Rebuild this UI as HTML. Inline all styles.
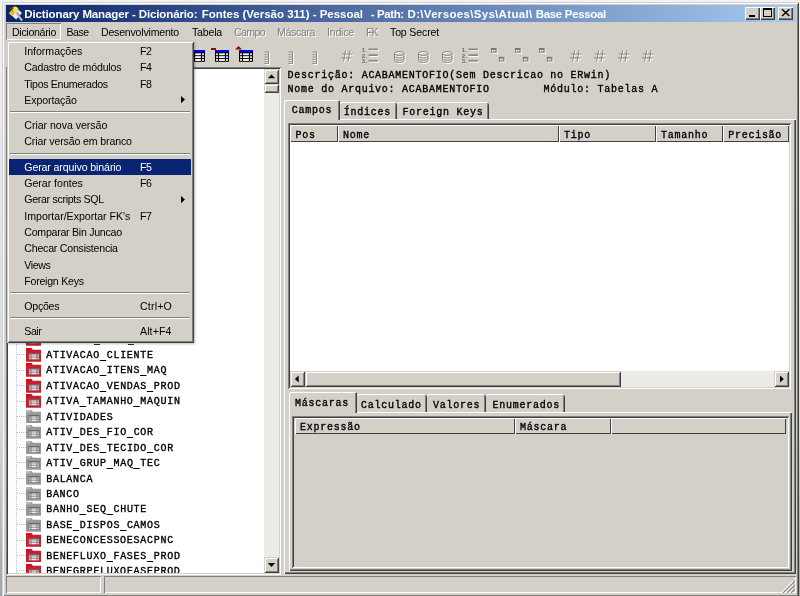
<!DOCTYPE html>
<html lang="pt"><head><meta charset="utf-8"><title>Dictionary Manager</title>
<style>
html,body{margin:0;padding:0;}
body{width:800px;height:596px;overflow:hidden;position:relative;
 background:linear-gradient(to bottom,#f1f1f8 0,#e3e6fa 25%,#cedee8 70%,#a2b2be 94%,#98a8b4 100%);}
#w{position:absolute;left:0;top:0;width:800px;height:596px;overflow:hidden;filter:blur(0.4px);}
#w div,#w svg,#w span.t{position:absolute;}
#w div{box-sizing:border-box;}
.t{white-space:pre;}
.u{position:relative;top:1.8px;}
</style></head>
<body><div id="w">
<div class="" style="left:2px;top:2px;width:797px;height:595px;background:#d4d0c8;box-shadow:inset 1px 1px #d4d0c8,inset -1px -1px #404040,inset 2px 2px #fff,inset -2px -2px #808080;"></div>
<div class="" style="left:6px;top:5px;width:790px;height:17px;background:linear-gradient(to right,#0a246a 0%,#a6caf0 100%);"></div>
<svg style="left:6px;top:5px" width="19" height="17" viewBox="6 5 19 17">
<path d="M9 13.2 L14.8 6.6 L22 13 L16.2 19.6 Z" fill="#ecece0"/>
<path d="M9 13.2 L12.5 9.2 L15.5 12 L12 16 Z" fill="#f0b428"/>
<ellipse cx="15.6" cy="9.4" rx="2.6" ry="3" fill="#e6e650" transform="rotate(-40 15.6 9.4)"/>
<path d="M10.3 7.8 L12.6 10.6 M11.8 7.2 L13.2 9" stroke="#a03810" stroke-width="1.1"/>
<path d="M17 12.6 L22.8 20.4" stroke="#56527a" stroke-width="1.4"/>
<path d="M16.2 13 L22 20.6" stroke="#c4bcd0" stroke-width="1.9"/>
</svg>
<span class="t" style="left:24.25px;top:6.60px;line-height:14px;font-family:'Liberation Sans',sans-serif;font-size:11.5px;font-weight:700;color:#fff;letter-spacing:-0.118px;">Dictionary Manager - Dicionário:</span>
<span class="t" style="left:201.75px;top:6.60px;line-height:14px;font-family:'Liberation Sans',sans-serif;font-size:11.5px;font-weight:700;color:#fff;letter-spacing:-0.016px;">Fontes (Versão 311) - Pessoal</span>
<span class="t" style="left:370.75px;top:6.60px;line-height:14px;font-family:'Liberation Sans',sans-serif;font-size:11.5px;font-weight:700;color:#fff;letter-spacing:-0.397px;">- Path:</span>
<span class="t" style="left:407.5px;top:6.60px;line-height:14px;font-family:'Liberation Sans',sans-serif;font-size:11.5px;font-weight:700;color:#fff;letter-spacing:0.321px;">D:\Versoes\Sys\Atual\</span>
<span class="t" style="left:535.75px;top:6.60px;line-height:14px;font-family:'Liberation Sans',sans-serif;font-size:11.5px;font-weight:700;color:#fff;letter-spacing:-0.327px;">Base Pessoal</span>
<div class="" style="left:745px;top:6.6px;width:15px;height:13.3px;background:#d4d0c8;box-shadow:inset 1px 1px #fff,inset -1px -1px #404040,inset -2px -2px #808080;"></div>
<div class="" style="left:749px;top:15.2px;width:6px;height:2px;background:#000;"></div>
<div class="" style="left:760.3px;top:6.6px;width:15px;height:13.3px;background:#d4d0c8;box-shadow:inset 1px 1px #fff,inset -1px -1px #404040,inset -2px -2px #808080;"></div>
<div class="" style="left:763.3px;top:8.4px;width:9px;height:8.4px;border:1px solid #000;border-top:2px solid #000;box-sizing:border-box;"></div>
<div class="" style="left:777.6px;top:6.6px;width:15px;height:13.3px;background:#d4d0c8;box-shadow:inset 1px 1px #fff,inset -1px -1px #404040,inset -2px -2px #808080;"></div>
<svg style="left:777.6px;top:6.4px" width="15" height="13.5" viewBox="0 0 15 13.5"><path d="M4 3.2 L11.4 10 M11.4 3.2 L4 10" stroke="#000" stroke-width="1.45"/></svg>
<div class="" style="left:6px;top:23px;width:55px;height:17px;box-shadow:inset 1px 1px #808080,inset -1px -1px #fff;"></div>
<span class="t" style="left:12px;top:25.10px;line-height:14px;font-family:'Liberation Sans',sans-serif;font-size:10.6px;font-weight:400;color:#000;letter-spacing:-0.311px;">Dicionário</span>
<span class="t" style="left:66.5px;top:24.60px;line-height:14px;font-family:'Liberation Sans',sans-serif;font-size:10.6px;font-weight:400;color:#000;letter-spacing:-0.539px;">Base</span>
<span class="t" style="left:101px;top:24.60px;line-height:14px;font-family:'Liberation Sans',sans-serif;font-size:10.6px;font-weight:400;color:#000;letter-spacing:-0.218px;">Desenvolvimento</span>
<span class="t" style="left:192px;top:24.60px;line-height:14px;font-family:'Liberation Sans',sans-serif;font-size:10.6px;font-weight:400;color:#000;letter-spacing:-0.203px;">Tabela</span>
<span class="t" style="left:235px;top:25.60px;line-height:14px;font-family:'Liberation Sans',sans-serif;font-size:10.6px;font-weight:400;color:#fff;letter-spacing:-0.631px;">Campo</span>
<span class="t" style="left:234px;top:24.60px;line-height:14px;font-family:'Liberation Sans',sans-serif;font-size:10.6px;font-weight:400;color:#808080;letter-spacing:-0.631px;">Campo</span>
<span class="t" style="left:278px;top:25.60px;line-height:14px;font-family:'Liberation Sans',sans-serif;font-size:10.6px;font-weight:400;color:#fff;letter-spacing:-0.375px;">Máscara</span>
<span class="t" style="left:277px;top:24.60px;line-height:14px;font-family:'Liberation Sans',sans-serif;font-size:10.6px;font-weight:400;color:#808080;letter-spacing:-0.375px;">Máscara</span>
<span class="t" style="left:328px;top:25.60px;line-height:14px;font-family:'Liberation Sans',sans-serif;font-size:10.6px;font-weight:400;color:#fff;letter-spacing:-0.214px;">Indice</span>
<span class="t" style="left:327px;top:24.60px;line-height:14px;font-family:'Liberation Sans',sans-serif;font-size:10.6px;font-weight:400;color:#808080;letter-spacing:-0.214px;">Indice</span>
<span class="t" style="left:367px;top:25.60px;line-height:14px;font-family:'Liberation Sans',sans-serif;font-size:10.6px;font-weight:400;color:#fff;letter-spacing:-1.023px;">FK</span>
<span class="t" style="left:366px;top:24.60px;line-height:14px;font-family:'Liberation Sans',sans-serif;font-size:10.6px;font-weight:400;color:#808080;letter-spacing:-1.023px;">FK</span>
<span class="t" style="left:390px;top:24.60px;line-height:14px;font-family:'Liberation Sans',sans-serif;font-size:10.6px;font-weight:400;color:#000;letter-spacing:-0.164px;">Top Secret</span>
<svg style="left:190.5px;top:49.8px" width="14.4" height="11.8" viewBox="0 0 15 12" preserveAspectRatio="none">
<rect x="0" y="0" width="15" height="12" fill="#000"/>
<rect x="0" y="0" width="15" height="2.4" fill="#0000f0"/>
<g fill="#fff"><rect x="1.2" y="3.4" width="1.8" height="1.9"/><rect x="4.3" y="3.4" width="6" height="1.9"/><rect x="11.6" y="3.4" width="1.8" height="1.9"/>
<rect x="1.2" y="6.3" width="1.8" height="1.9"/><rect x="4.3" y="6.3" width="6" height="1.9"/><rect x="11.6" y="6.3" width="1.8" height="1.9"/>
<rect x="1.2" y="9.2" width="1.8" height="1.9"/><rect x="4.3" y="9.2" width="6" height="1.9"/><rect x="11.6" y="9.2" width="1.8" height="1.9"/></g></svg>
<svg style="left:214.7px;top:49.8px" width="14.4" height="11.8" viewBox="0 0 15 12" preserveAspectRatio="none">
<rect x="0" y="0" width="15" height="12" fill="#000"/>
<rect x="0" y="0" width="15" height="2.4" fill="#0000f0"/>
<g fill="#fff"><rect x="1.2" y="3.4" width="1.8" height="1.9"/><rect x="4.3" y="3.4" width="6" height="1.9"/><rect x="11.6" y="3.4" width="1.8" height="1.9"/>
<rect x="1.2" y="6.3" width="1.8" height="1.9"/><rect x="4.3" y="6.3" width="6" height="1.9"/><rect x="11.6" y="6.3" width="1.8" height="1.9"/>
<rect x="1.2" y="9.2" width="1.8" height="1.9"/><rect x="4.3" y="9.2" width="6" height="1.9"/><rect x="11.6" y="9.2" width="1.8" height="1.9"/></g></svg>
<svg style="left:238.9px;top:49.8px" width="14.4" height="11.8" viewBox="0 0 15 12" preserveAspectRatio="none">
<rect x="0" y="0" width="15" height="12" fill="#000"/>
<rect x="0" y="0" width="15" height="2.4" fill="#0000f0"/>
<g fill="#fff"><rect x="1.2" y="3.4" width="1.8" height="1.9"/><rect x="4.3" y="3.4" width="6" height="1.9"/><rect x="11.6" y="3.4" width="1.8" height="1.9"/>
<rect x="1.2" y="6.3" width="1.8" height="1.9"/><rect x="4.3" y="6.3" width="6" height="1.9"/><rect x="11.6" y="6.3" width="1.8" height="1.9"/>
<rect x="1.2" y="9.2" width="1.8" height="1.9"/><rect x="4.3" y="9.2" width="6" height="1.9"/><rect x="11.6" y="9.2" width="1.8" height="1.9"/></g></svg>
<div class="" style="left:210.8px;top:47.8px;width:5.6px;height:1.8px;background:#a00000;"></div>
<svg style="left:235px;top:46px" width="7.2" height="3.6" viewBox="0 0 8 4"><path d="M0 4 L4 0 L8 4Z" fill="#a00000"/></svg>
<svg style="left:263.8px;top:50.5px" width="6.5" height="14" viewBox="0 0 6.5 14">
<g fill="none" stroke="#fff" stroke-width="1"><path d="M1.5 2 H5.5 V13.5 H1.5 M1.5 4.8 H5.5 M1.5 7.1 H5.5 M1.5 9.4 H5.5 M1.5 11.6 H5.5"/></g>
<g fill="none" stroke="#8a8781" stroke-width="1"><path d="M0.5 1 H4.5 V12.5 H0.5 M0.5 3.8 H4.5 M0.5 6.1 H4.5 M0.5 8.4 H4.5 M0.5 10.6 H4.5"/></g></svg>
<svg style="left:287.8px;top:50.5px" width="6.5" height="14" viewBox="0 0 6.5 14">
<g fill="none" stroke="#fff" stroke-width="1"><path d="M1.5 2 H5.5 V13.5 H1.5 M1.5 4.8 H5.5 M1.5 7.1 H5.5 M1.5 9.4 H5.5 M1.5 11.6 H5.5"/></g>
<g fill="none" stroke="#8a8781" stroke-width="1"><path d="M0.5 1 H4.5 V12.5 H0.5 M0.5 3.8 H4.5 M0.5 6.1 H4.5 M0.5 8.4 H4.5 M0.5 10.6 H4.5"/></g></svg>
<svg style="left:312px;top:50.5px" width="6.5" height="14" viewBox="0 0 6.5 14">
<g fill="none" stroke="#fff" stroke-width="1"><path d="M1.5 2 H5.5 V13.5 H1.5 M1.5 4.8 H5.5 M1.5 7.1 H5.5 M1.5 9.4 H5.5 M1.5 11.6 H5.5"/></g>
<g fill="none" stroke="#8a8781" stroke-width="1"><path d="M0.5 1 H4.5 V12.5 H0.5 M0.5 3.8 H4.5 M0.5 6.1 H4.5 M0.5 8.4 H4.5 M0.5 10.6 H4.5"/></g></svg>
<svg style="left:341px;top:50px" width="13" height="13" viewBox="0 0 13 13">
<g fill="none" stroke="#fff" stroke-width="1"><path d="M5.5 1.5 L3.5 12.5 M10 1.5 L8 12.5 M2 5 H12.5 M1 9 H11.5"/></g>
<g fill="none" stroke="#8a8781" stroke-width="1"><path d="M4.5 0.5 L2.5 11.5 M9 0.5 L7 11.5 M1 4 H11.5 M0 8 H10.5"/></g></svg>
<svg style="left:570px;top:50px" width="13" height="13" viewBox="0 0 13 13">
<g fill="none" stroke="#fff" stroke-width="1"><path d="M5.5 1.5 L3.5 12.5 M10 1.5 L8 12.5 M2 5 H12.5 M1 9 H11.5"/></g>
<g fill="none" stroke="#8a8781" stroke-width="1"><path d="M4.5 0.5 L2.5 11.5 M9 0.5 L7 11.5 M1 4 H11.5 M0 8 H10.5"/></g></svg>
<svg style="left:594px;top:50px" width="13" height="13" viewBox="0 0 13 13">
<g fill="none" stroke="#fff" stroke-width="1"><path d="M5.5 1.5 L3.5 12.5 M10 1.5 L8 12.5 M2 5 H12.5 M1 9 H11.5"/></g>
<g fill="none" stroke="#8a8781" stroke-width="1"><path d="M4.5 0.5 L2.5 11.5 M9 0.5 L7 11.5 M1 4 H11.5 M0 8 H10.5"/></g></svg>
<svg style="left:618px;top:50px" width="13" height="13" viewBox="0 0 13 13">
<g fill="none" stroke="#fff" stroke-width="1"><path d="M5.5 1.5 L3.5 12.5 M10 1.5 L8 12.5 M2 5 H12.5 M1 9 H11.5"/></g>
<g fill="none" stroke="#8a8781" stroke-width="1"><path d="M4.5 0.5 L2.5 11.5 M9 0.5 L7 11.5 M1 4 H11.5 M0 8 H10.5"/></g></svg>
<svg style="left:642px;top:50px" width="13" height="13" viewBox="0 0 13 13">
<g fill="none" stroke="#fff" stroke-width="1"><path d="M5.5 1.5 L3.5 12.5 M10 1.5 L8 12.5 M2 5 H12.5 M1 9 H11.5"/></g>
<g fill="none" stroke="#8a8781" stroke-width="1"><path d="M4.5 0.5 L2.5 11.5 M9 0.5 L7 11.5 M1 4 H11.5 M0 8 H10.5"/></g></svg>
<svg style="left:361px;top:46.5px" width="18" height="17" viewBox="0 0 18 17">
<g fill="#fff"><rect x="8.3" y="2.4" width="9.4" height="1.7"/><rect x="8.3" y="8.2" width="9.4" height="1.7"/><rect x="8.3" y="13.8" width="9.4" height="1.7"/></g>
<g fill="#8a8781"><rect x="7.5" y="1.5" width="9.4" height="1.7"/><rect x="7.5" y="7.3" width="9.4" height="1.7"/><rect x="7.5" y="12.9" width="9.4" height="1.7"/></g>
<g font-family="Liberation Sans,sans-serif" font-size="6" font-weight="700" fill="#6c6a66"><text x="0.8" y="5.2">1.</text><text x="0.8" y="10.8">2.</text><text x="0.8" y="16.3">3.</text></g></svg>
<svg style="left:461px;top:46.5px" width="18" height="17" viewBox="0 0 18 17">
<g fill="#fff"><rect x="8.3" y="2.4" width="9.4" height="1.7"/><rect x="8.3" y="8.2" width="9.4" height="1.7"/><rect x="8.3" y="13.8" width="9.4" height="1.7"/></g>
<g fill="#8a8781"><rect x="7.5" y="1.5" width="9.4" height="1.7"/><rect x="7.5" y="7.3" width="9.4" height="1.7"/><rect x="7.5" y="12.9" width="9.4" height="1.7"/></g>
<g font-family="Liberation Sans,sans-serif" font-size="6" font-weight="700" fill="#6c6a66"><text x="0.8" y="5.2">1.</text><text x="0.8" y="10.8">2.</text><text x="0.8" y="16.3">3.</text></g></svg>
<svg style="left:393.8px;top:50.5px" width="13" height="14" viewBox="0 0 13 14">
<g fill="none" stroke="#fff" stroke-width="1"><ellipse cx="6.2" cy="3.5" rx="4.7" ry="2"/><path d="M1.5 3.5 V10.5 A4.7 2 0 0 0 10.9 10.5 V3.5 M1.5 6 A4.7 2 0 0 0 10.9 6 M1.5 8.3 A4.7 2 0 0 0 10.9 8.3"/></g>
<g fill="none" stroke="#8a8781" stroke-width="1"><ellipse cx="5.2" cy="2.5" rx="4.7" ry="2"/><path d="M0.5 2.5 V9.5 A4.7 2 0 0 0 9.9 9.5 V2.5 M0.5 5 A4.7 2 0 0 0 9.9 5 M0.5 7.3 A4.7 2 0 0 0 9.9 7.3"/></g></svg>
<svg style="left:417.8px;top:50.5px" width="13" height="14" viewBox="0 0 13 14">
<g fill="none" stroke="#fff" stroke-width="1"><ellipse cx="6.2" cy="3.5" rx="4.7" ry="2"/><path d="M1.5 3.5 V10.5 A4.7 2 0 0 0 10.9 10.5 V3.5 M1.5 6 A4.7 2 0 0 0 10.9 6 M1.5 8.3 A4.7 2 0 0 0 10.9 8.3"/></g>
<g fill="none" stroke="#8a8781" stroke-width="1"><ellipse cx="5.2" cy="2.5" rx="4.7" ry="2"/><path d="M0.5 2.5 V9.5 A4.7 2 0 0 0 9.9 9.5 V2.5 M0.5 5 A4.7 2 0 0 0 9.9 5 M0.5 7.3 A4.7 2 0 0 0 9.9 7.3"/></g></svg>
<svg style="left:442px;top:50.5px" width="13" height="14" viewBox="0 0 13 14">
<g fill="none" stroke="#fff" stroke-width="1"><ellipse cx="6.2" cy="3.5" rx="4.7" ry="2"/><path d="M1.5 3.5 V10.5 A4.7 2 0 0 0 10.9 10.5 V3.5 M1.5 6 A4.7 2 0 0 0 10.9 6 M1.5 8.3 A4.7 2 0 0 0 10.9 8.3"/></g>
<g fill="none" stroke="#8a8781" stroke-width="1"><ellipse cx="5.2" cy="2.5" rx="4.7" ry="2"/><path d="M0.5 2.5 V9.5 A4.7 2 0 0 0 9.9 9.5 V2.5 M0.5 5 A4.7 2 0 0 0 9.9 5 M0.5 7.3 A4.7 2 0 0 0 9.9 7.3"/></g></svg>
<svg style="left:491px;top:48.3px" width="16" height="16" viewBox="0 0 16 16">
<g fill="none" stroke="#fff" stroke-width="1"><rect x="1.5" y="1.5" width="4.6" height="3.6"/><rect x="9.3" y="10.3" width="4.6" height="3.6"/></g>
<g fill="none" stroke="#76736e" stroke-width="1"><rect x="0.5" y="0.5" width="4.6" height="3.6"/><rect x="8.3" y="9.3" width="4.6" height="3.6"/><path d="M0.5 1.4 H5.1 M8.3 10.2 H12.9"/></g></svg>
<svg style="left:515px;top:48.3px" width="16" height="16" viewBox="0 0 16 16">
<g fill="none" stroke="#fff" stroke-width="1"><rect x="1.5" y="1.5" width="4.6" height="3.6"/><rect x="9.3" y="10.3" width="4.6" height="3.6"/></g>
<g fill="none" stroke="#76736e" stroke-width="1"><rect x="0.5" y="0.5" width="4.6" height="3.6"/><rect x="8.3" y="9.3" width="4.6" height="3.6"/><path d="M0.5 1.4 H5.1 M8.3 10.2 H12.9"/></g></svg>
<svg style="left:539px;top:48.3px" width="16" height="16" viewBox="0 0 16 16">
<g fill="none" stroke="#fff" stroke-width="1"><rect x="1.5" y="1.5" width="4.6" height="3.6"/><rect x="9.3" y="10.3" width="4.6" height="3.6"/></g>
<g fill="none" stroke="#76736e" stroke-width="1"><rect x="0.5" y="0.5" width="4.6" height="3.6"/><rect x="8.3" y="9.3" width="4.6" height="3.6"/><path d="M0.5 1.4 H5.1 M8.3 10.2 H12.9"/></g></svg>
<div class="" style="left:6px;top:67px;width:275px;height:507.5px;background:#fff;box-shadow:inset 1px 1px #808080,inset -1px -1px #fff,inset 2px 2px #404040,inset -2px -2px #d4d0c8;"></div>
<div style="left:0;top:0;width:264px;height:572.7px;overflow:hidden">
<div class="" style="left:15.6px;top:344px;width:0px;height:229px;border-left:1px dotted #bcc4c4;"></div>
<div class="" style="left:16.5px;top:338.86px;width:9px;height:0px;border-top:1px dotted #bcc4c4;"></div>
<svg style="left:26.1px;top:332.46px" width="15" height="13.8" viewBox="0 0 15 13.8">
<path d="M0 0 H5.6 L6.8 1.8 H15 V13.8 H0 Z" fill="#c4202e"/><path d="M0 0 H5.6 L4 2.4 H0Z" fill="#ee0018"/>
<rect x="2.5" y="5.2" width="11" height="6.6" fill="#8c5058"/>
<rect x="2.5" y="5.2" width="11" height="1" fill="#606868"/>
<g fill="#eef4f4"><rect x="3.3" y="6.45" width="1.3" height="1.2"/><rect x="5.4" y="6.45" width="5.2" height="1.2"/><rect x="11.4" y="6.45" width="1.3" height="1.2"/><rect x="3.3" y="8.25" width="1.3" height="1.2"/><rect x="5.4" y="8.25" width="5.2" height="1.2"/><rect x="11.4" y="8.25" width="1.3" height="1.2"/><rect x="3.3" y="10.05" width="1.3" height="1.2"/><rect x="5.4" y="10.05" width="5.2" height="1.2"/><rect x="11.4" y="10.05" width="1.3" height="1.2"/></g></svg>
<div class="" style="left:16.5px;top:354.3px;width:9px;height:0px;border-top:1px dotted #bcc4c4;"></div>
<svg style="left:26.1px;top:347.90px" width="15" height="13.8" viewBox="0 0 15 13.8">
<path d="M0 0 H5.6 L6.8 1.8 H15 V13.8 H0 Z" fill="#c4202e"/><path d="M0 0 H5.6 L4 2.4 H0Z" fill="#ee0018"/>
<rect x="2.5" y="5.2" width="11" height="6.6" fill="#8c5058"/>
<rect x="2.5" y="5.2" width="11" height="1" fill="#606868"/>
<g fill="#eef4f4"><rect x="3.3" y="6.45" width="1.3" height="1.2"/><rect x="5.4" y="6.45" width="5.2" height="1.2"/><rect x="11.4" y="6.45" width="1.3" height="1.2"/><rect x="3.3" y="8.25" width="1.3" height="1.2"/><rect x="5.4" y="8.25" width="5.2" height="1.2"/><rect x="11.4" y="8.25" width="1.3" height="1.2"/><rect x="3.3" y="10.05" width="1.3" height="1.2"/><rect x="5.4" y="10.05" width="5.2" height="1.2"/><rect x="11.4" y="10.05" width="1.3" height="1.2"/></g></svg>
<span class="t" style="left:46.2px;top:349.00px;line-height:14px;font-family:'Liberation Mono',monospace;font-size:10px;font-weight:400;color:#000;letter-spacing:0.719px;-webkit-text-stroke:0.35px #000;">ATIVACAO<b class="u">_</b>CLIENTE</span>
<div class="" style="left:16.5px;top:369.74px;width:9px;height:0px;border-top:1px dotted #bcc4c4;"></div>
<svg style="left:26.1px;top:363.34px" width="15" height="13.8" viewBox="0 0 15 13.8">
<path d="M0 0 H5.6 L6.8 1.8 H15 V13.8 H0 Z" fill="#c4202e"/><path d="M0 0 H5.6 L4 2.4 H0Z" fill="#ee0018"/>
<rect x="2.5" y="5.2" width="11" height="6.6" fill="#8c5058"/>
<rect x="2.5" y="5.2" width="11" height="1" fill="#606868"/>
<g fill="#eef4f4"><rect x="3.3" y="6.45" width="1.3" height="1.2"/><rect x="5.4" y="6.45" width="5.2" height="1.2"/><rect x="11.4" y="6.45" width="1.3" height="1.2"/><rect x="3.3" y="8.25" width="1.3" height="1.2"/><rect x="5.4" y="8.25" width="5.2" height="1.2"/><rect x="11.4" y="8.25" width="1.3" height="1.2"/><rect x="3.3" y="10.05" width="1.3" height="1.2"/><rect x="5.4" y="10.05" width="5.2" height="1.2"/><rect x="11.4" y="10.05" width="1.3" height="1.2"/></g></svg>
<span class="t" style="left:46.2px;top:364.44px;line-height:14px;font-family:'Liberation Mono',monospace;font-size:10px;font-weight:400;color:#000;letter-spacing:0.718px;-webkit-text-stroke:0.35px #000;">ATIVACAO<b class="u">_</b>ITENS<b class="u">_</b>MAQ</span>
<div class="" style="left:16.5px;top:385.18px;width:9px;height:0px;border-top:1px dotted #bcc4c4;"></div>
<svg style="left:26.1px;top:378.78px" width="15" height="13.8" viewBox="0 0 15 13.8">
<path d="M0 0 H5.6 L6.8 1.8 H15 V13.8 H0 Z" fill="#c4202e"/><path d="M0 0 H5.6 L4 2.4 H0Z" fill="#ee0018"/>
<rect x="2.5" y="5.2" width="11" height="6.6" fill="#8c5058"/>
<rect x="2.5" y="5.2" width="11" height="1" fill="#606868"/>
<g fill="#eef4f4"><rect x="3.3" y="6.45" width="1.3" height="1.2"/><rect x="5.4" y="6.45" width="5.2" height="1.2"/><rect x="11.4" y="6.45" width="1.3" height="1.2"/><rect x="3.3" y="8.25" width="1.3" height="1.2"/><rect x="5.4" y="8.25" width="5.2" height="1.2"/><rect x="11.4" y="8.25" width="1.3" height="1.2"/><rect x="3.3" y="10.05" width="1.3" height="1.2"/><rect x="5.4" y="10.05" width="5.2" height="1.2"/><rect x="11.4" y="10.05" width="1.3" height="1.2"/></g></svg>
<span class="t" style="left:46.2px;top:379.88px;line-height:14px;font-family:'Liberation Mono',monospace;font-size:10px;font-weight:400;color:#000;letter-spacing:0.718px;-webkit-text-stroke:0.35px #000;">ATIVACAO<b class="u">_</b>VENDAS<b class="u">_</b>PROD</span>
<div class="" style="left:16.5px;top:400.62px;width:9px;height:0px;border-top:1px dotted #bcc4c4;"></div>
<svg style="left:26.1px;top:394.22px" width="15" height="13.8" viewBox="0 0 15 13.8">
<path d="M0 0 H5.6 L6.8 1.8 H15 V13.8 H0 Z" fill="#c4202e"/><path d="M0 0 H5.6 L4 2.4 H0Z" fill="#ee0018"/>
<rect x="2.5" y="5.2" width="11" height="6.6" fill="#8c5058"/>
<rect x="2.5" y="5.2" width="11" height="1" fill="#606868"/>
<g fill="#eef4f4"><rect x="3.3" y="6.45" width="1.3" height="1.2"/><rect x="5.4" y="6.45" width="5.2" height="1.2"/><rect x="11.4" y="6.45" width="1.3" height="1.2"/><rect x="3.3" y="8.25" width="1.3" height="1.2"/><rect x="5.4" y="8.25" width="5.2" height="1.2"/><rect x="11.4" y="8.25" width="1.3" height="1.2"/><rect x="3.3" y="10.05" width="1.3" height="1.2"/><rect x="5.4" y="10.05" width="5.2" height="1.2"/><rect x="11.4" y="10.05" width="1.3" height="1.2"/></g></svg>
<span class="t" style="left:46.2px;top:395.32px;line-height:14px;font-family:'Liberation Mono',monospace;font-size:10px;font-weight:400;color:#000;letter-spacing:0.718px;-webkit-text-stroke:0.35px #000;">ATIVA<b class="u">_</b>TAMANHO<b class="u">_</b>MAQUIN</span>
<div class="" style="left:16.5px;top:416.06px;width:9px;height:0px;border-top:1px dotted #bcc4c4;"></div>
<svg style="left:26.1px;top:409.66px" width="15" height="13.8" viewBox="0 0 15 13.8">
<path d="M0 0 H5.6 L6.8 1.8 H15 V13.8 H0 Z" fill="#9a9a9a"/><path d="M0 0 H5.6 L4 2.4 H0Z" fill="#b8b8b8"/>
<rect x="2.5" y="5.2" width="11" height="6.6" fill="#6c6c6c"/>
<rect x="2.5" y="5.2" width="11" height="1" fill="#606868"/>
<g fill="#eef4f4"><rect x="3.3" y="6.45" width="1.3" height="1.2"/><rect x="5.4" y="6.45" width="5.2" height="1.2"/><rect x="11.4" y="6.45" width="1.3" height="1.2"/><rect x="3.3" y="8.25" width="1.3" height="1.2"/><rect x="5.4" y="8.25" width="5.2" height="1.2"/><rect x="11.4" y="8.25" width="1.3" height="1.2"/><rect x="3.3" y="10.05" width="1.3" height="1.2"/><rect x="5.4" y="10.05" width="5.2" height="1.2"/><rect x="11.4" y="10.05" width="1.3" height="1.2"/></g></svg>
<span class="t" style="left:46.2px;top:410.76px;line-height:14px;font-family:'Liberation Mono',monospace;font-size:10px;font-weight:400;color:#000;letter-spacing:0.718px;-webkit-text-stroke:0.35px #000;">ATIVIDADES</span>
<div class="" style="left:16.5px;top:431.5px;width:9px;height:0px;border-top:1px dotted #bcc4c4;"></div>
<svg style="left:26.1px;top:425.10px" width="15" height="13.8" viewBox="0 0 15 13.8">
<path d="M0 0 H5.6 L6.8 1.8 H15 V13.8 H0 Z" fill="#9a9a9a"/><path d="M0 0 H5.6 L4 2.4 H0Z" fill="#b8b8b8"/>
<rect x="2.5" y="5.2" width="11" height="6.6" fill="#6c6c6c"/>
<rect x="2.5" y="5.2" width="11" height="1" fill="#606868"/>
<g fill="#eef4f4"><rect x="3.3" y="6.45" width="1.3" height="1.2"/><rect x="5.4" y="6.45" width="5.2" height="1.2"/><rect x="11.4" y="6.45" width="1.3" height="1.2"/><rect x="3.3" y="8.25" width="1.3" height="1.2"/><rect x="5.4" y="8.25" width="5.2" height="1.2"/><rect x="11.4" y="8.25" width="1.3" height="1.2"/><rect x="3.3" y="10.05" width="1.3" height="1.2"/><rect x="5.4" y="10.05" width="5.2" height="1.2"/><rect x="11.4" y="10.05" width="1.3" height="1.2"/></g></svg>
<span class="t" style="left:46.2px;top:426.20px;line-height:14px;font-family:'Liberation Mono',monospace;font-size:10px;font-weight:400;color:#000;letter-spacing:0.719px;-webkit-text-stroke:0.35px #000;">ATIV<b class="u">_</b>DES<b class="u">_</b>FIO<b class="u">_</b>COR</span>
<div class="" style="left:16.5px;top:446.94px;width:9px;height:0px;border-top:1px dotted #bcc4c4;"></div>
<svg style="left:26.1px;top:440.54px" width="15" height="13.8" viewBox="0 0 15 13.8">
<path d="M0 0 H5.6 L6.8 1.8 H15 V13.8 H0 Z" fill="#9a9a9a"/><path d="M0 0 H5.6 L4 2.4 H0Z" fill="#b8b8b8"/>
<rect x="2.5" y="5.2" width="11" height="6.6" fill="#6c6c6c"/>
<rect x="2.5" y="5.2" width="11" height="1" fill="#606868"/>
<g fill="#eef4f4"><rect x="3.3" y="6.45" width="1.3" height="1.2"/><rect x="5.4" y="6.45" width="5.2" height="1.2"/><rect x="11.4" y="6.45" width="1.3" height="1.2"/><rect x="3.3" y="8.25" width="1.3" height="1.2"/><rect x="5.4" y="8.25" width="5.2" height="1.2"/><rect x="11.4" y="8.25" width="1.3" height="1.2"/><rect x="3.3" y="10.05" width="1.3" height="1.2"/><rect x="5.4" y="10.05" width="5.2" height="1.2"/><rect x="11.4" y="10.05" width="1.3" height="1.2"/></g></svg>
<span class="t" style="left:46.2px;top:441.64px;line-height:14px;font-family:'Liberation Mono',monospace;font-size:10px;font-weight:400;color:#000;letter-spacing:0.718px;-webkit-text-stroke:0.35px #000;">ATIV<b class="u">_</b>DES<b class="u">_</b>TECIDO<b class="u">_</b>COR</span>
<div class="" style="left:16.5px;top:462.38px;width:9px;height:0px;border-top:1px dotted #bcc4c4;"></div>
<svg style="left:26.1px;top:455.98px" width="15" height="13.8" viewBox="0 0 15 13.8">
<path d="M0 0 H5.6 L6.8 1.8 H15 V13.8 H0 Z" fill="#9a9a9a"/><path d="M0 0 H5.6 L4 2.4 H0Z" fill="#b8b8b8"/>
<rect x="2.5" y="5.2" width="11" height="6.6" fill="#6c6c6c"/>
<rect x="2.5" y="5.2" width="11" height="1" fill="#606868"/>
<g fill="#eef4f4"><rect x="3.3" y="6.45" width="1.3" height="1.2"/><rect x="5.4" y="6.45" width="5.2" height="1.2"/><rect x="11.4" y="6.45" width="1.3" height="1.2"/><rect x="3.3" y="8.25" width="1.3" height="1.2"/><rect x="5.4" y="8.25" width="5.2" height="1.2"/><rect x="11.4" y="8.25" width="1.3" height="1.2"/><rect x="3.3" y="10.05" width="1.3" height="1.2"/><rect x="5.4" y="10.05" width="5.2" height="1.2"/><rect x="11.4" y="10.05" width="1.3" height="1.2"/></g></svg>
<span class="t" style="left:46.2px;top:457.08px;line-height:14px;font-family:'Liberation Mono',monospace;font-size:10px;font-weight:400;color:#000;letter-spacing:0.718px;-webkit-text-stroke:0.35px #000;">ATIV<b class="u">_</b>GRUP<b class="u">_</b>MAQ<b class="u">_</b>TEC</span>
<div class="" style="left:16.5px;top:477.82000000000005px;width:9px;height:0px;border-top:1px dotted #bcc4c4;"></div>
<svg style="left:26.1px;top:471.42px" width="15" height="13.8" viewBox="0 0 15 13.8">
<path d="M0 0 H5.6 L6.8 1.8 H15 V13.8 H0 Z" fill="#9a9a9a"/><path d="M0 0 H5.6 L4 2.4 H0Z" fill="#b8b8b8"/>
<rect x="2.5" y="5.2" width="11" height="6.6" fill="#6c6c6c"/>
<rect x="2.5" y="5.2" width="11" height="1" fill="#606868"/>
<g fill="#eef4f4"><rect x="3.3" y="6.45" width="1.3" height="1.2"/><rect x="5.4" y="6.45" width="5.2" height="1.2"/><rect x="11.4" y="6.45" width="1.3" height="1.2"/><rect x="3.3" y="8.25" width="1.3" height="1.2"/><rect x="5.4" y="8.25" width="5.2" height="1.2"/><rect x="11.4" y="8.25" width="1.3" height="1.2"/><rect x="3.3" y="10.05" width="1.3" height="1.2"/><rect x="5.4" y="10.05" width="5.2" height="1.2"/><rect x="11.4" y="10.05" width="1.3" height="1.2"/></g></svg>
<span class="t" style="left:46.2px;top:472.52px;line-height:14px;font-family:'Liberation Mono',monospace;font-size:10px;font-weight:400;color:#000;letter-spacing:0.718px;-webkit-text-stroke:0.35px #000;">BALANCA</span>
<div class="" style="left:16.5px;top:493.26px;width:9px;height:0px;border-top:1px dotted #bcc4c4;"></div>
<svg style="left:26.1px;top:486.86px" width="15" height="13.8" viewBox="0 0 15 13.8">
<path d="M0 0 H5.6 L6.8 1.8 H15 V13.8 H0 Z" fill="#9a9a9a"/><path d="M0 0 H5.6 L4 2.4 H0Z" fill="#b8b8b8"/>
<rect x="2.5" y="5.2" width="11" height="6.6" fill="#6c6c6c"/>
<rect x="2.5" y="5.2" width="11" height="1" fill="#606868"/>
<g fill="#eef4f4"><rect x="3.3" y="6.45" width="1.3" height="1.2"/><rect x="5.4" y="6.45" width="5.2" height="1.2"/><rect x="11.4" y="6.45" width="1.3" height="1.2"/><rect x="3.3" y="8.25" width="1.3" height="1.2"/><rect x="5.4" y="8.25" width="5.2" height="1.2"/><rect x="11.4" y="8.25" width="1.3" height="1.2"/><rect x="3.3" y="10.05" width="1.3" height="1.2"/><rect x="5.4" y="10.05" width="5.2" height="1.2"/><rect x="11.4" y="10.05" width="1.3" height="1.2"/></g></svg>
<span class="t" style="left:46.2px;top:487.96px;line-height:14px;font-family:'Liberation Mono',monospace;font-size:10px;font-weight:400;color:#000;letter-spacing:0.717px;-webkit-text-stroke:0.35px #000;">BANCO</span>
<div class="" style="left:16.5px;top:508.70000000000005px;width:9px;height:0px;border-top:1px dotted #bcc4c4;"></div>
<svg style="left:26.1px;top:502.30px" width="15" height="13.8" viewBox="0 0 15 13.8">
<path d="M0 0 H5.6 L6.8 1.8 H15 V13.8 H0 Z" fill="#9a9a9a"/><path d="M0 0 H5.6 L4 2.4 H0Z" fill="#b8b8b8"/>
<rect x="2.5" y="5.2" width="11" height="6.6" fill="#6c6c6c"/>
<rect x="2.5" y="5.2" width="11" height="1" fill="#606868"/>
<g fill="#eef4f4"><rect x="3.3" y="6.45" width="1.3" height="1.2"/><rect x="5.4" y="6.45" width="5.2" height="1.2"/><rect x="11.4" y="6.45" width="1.3" height="1.2"/><rect x="3.3" y="8.25" width="1.3" height="1.2"/><rect x="5.4" y="8.25" width="5.2" height="1.2"/><rect x="11.4" y="8.25" width="1.3" height="1.2"/><rect x="3.3" y="10.05" width="1.3" height="1.2"/><rect x="5.4" y="10.05" width="5.2" height="1.2"/><rect x="11.4" y="10.05" width="1.3" height="1.2"/></g></svg>
<span class="t" style="left:46.2px;top:503.40px;line-height:14px;font-family:'Liberation Mono',monospace;font-size:10px;font-weight:400;color:#000;letter-spacing:0.719px;-webkit-text-stroke:0.35px #000;">BANHO<b class="u">_</b>SEQ<b class="u">_</b>CHUTE</span>
<div class="" style="left:16.5px;top:524.14px;width:9px;height:0px;border-top:1px dotted #bcc4c4;"></div>
<svg style="left:26.1px;top:517.74px" width="15" height="13.8" viewBox="0 0 15 13.8">
<path d="M0 0 H5.6 L6.8 1.8 H15 V13.8 H0 Z" fill="#9a9a9a"/><path d="M0 0 H5.6 L4 2.4 H0Z" fill="#b8b8b8"/>
<rect x="2.5" y="5.2" width="11" height="6.6" fill="#6c6c6c"/>
<rect x="2.5" y="5.2" width="11" height="1" fill="#606868"/>
<g fill="#eef4f4"><rect x="3.3" y="6.45" width="1.3" height="1.2"/><rect x="5.4" y="6.45" width="5.2" height="1.2"/><rect x="11.4" y="6.45" width="1.3" height="1.2"/><rect x="3.3" y="8.25" width="1.3" height="1.2"/><rect x="5.4" y="8.25" width="5.2" height="1.2"/><rect x="11.4" y="8.25" width="1.3" height="1.2"/><rect x="3.3" y="10.05" width="1.3" height="1.2"/><rect x="5.4" y="10.05" width="5.2" height="1.2"/><rect x="11.4" y="10.05" width="1.3" height="1.2"/></g></svg>
<span class="t" style="left:46.2px;top:518.84px;line-height:14px;font-family:'Liberation Mono',monospace;font-size:10px;font-weight:400;color:#000;letter-spacing:0.718px;-webkit-text-stroke:0.35px #000;">BASE<b class="u">_</b>DISPOS<b class="u">_</b>CAMOS</span>
<div class="" style="left:16.5px;top:539.58px;width:9px;height:0px;border-top:1px dotted #bcc4c4;"></div>
<svg style="left:26.1px;top:533.18px" width="15" height="13.8" viewBox="0 0 15 13.8">
<path d="M0 0 H5.6 L6.8 1.8 H15 V13.8 H0 Z" fill="#c4202e"/><path d="M0 0 H5.6 L4 2.4 H0Z" fill="#ee0018"/>
<rect x="2.5" y="5.2" width="11" height="6.6" fill="#8c5058"/>
<rect x="2.5" y="5.2" width="11" height="1" fill="#606868"/>
<g fill="#eef4f4"><rect x="3.3" y="6.45" width="1.3" height="1.2"/><rect x="5.4" y="6.45" width="5.2" height="1.2"/><rect x="11.4" y="6.45" width="1.3" height="1.2"/><rect x="3.3" y="8.25" width="1.3" height="1.2"/><rect x="5.4" y="8.25" width="5.2" height="1.2"/><rect x="11.4" y="8.25" width="1.3" height="1.2"/><rect x="3.3" y="10.05" width="1.3" height="1.2"/><rect x="5.4" y="10.05" width="5.2" height="1.2"/><rect x="11.4" y="10.05" width="1.3" height="1.2"/></g></svg>
<span class="t" style="left:46.2px;top:534.28px;line-height:14px;font-family:'Liberation Mono',monospace;font-size:10px;font-weight:400;color:#000;letter-spacing:0.718px;-webkit-text-stroke:0.35px #000;">BENECONCESSOESACPNC</span>
<div class="" style="left:16.5px;top:555.02px;width:9px;height:0px;border-top:1px dotted #bcc4c4;"></div>
<svg style="left:26.1px;top:548.62px" width="15" height="13.8" viewBox="0 0 15 13.8">
<path d="M0 0 H5.6 L6.8 1.8 H15 V13.8 H0 Z" fill="#c4202e"/><path d="M0 0 H5.6 L4 2.4 H0Z" fill="#ee0018"/>
<rect x="2.5" y="5.2" width="11" height="6.6" fill="#8c5058"/>
<rect x="2.5" y="5.2" width="11" height="1" fill="#606868"/>
<g fill="#eef4f4"><rect x="3.3" y="6.45" width="1.3" height="1.2"/><rect x="5.4" y="6.45" width="5.2" height="1.2"/><rect x="11.4" y="6.45" width="1.3" height="1.2"/><rect x="3.3" y="8.25" width="1.3" height="1.2"/><rect x="5.4" y="8.25" width="5.2" height="1.2"/><rect x="11.4" y="8.25" width="1.3" height="1.2"/><rect x="3.3" y="10.05" width="1.3" height="1.2"/><rect x="5.4" y="10.05" width="5.2" height="1.2"/><rect x="11.4" y="10.05" width="1.3" height="1.2"/></g></svg>
<span class="t" style="left:46.2px;top:549.72px;line-height:14px;font-family:'Liberation Mono',monospace;font-size:10px;font-weight:400;color:#000;letter-spacing:0.718px;-webkit-text-stroke:0.35px #000;">BENEFLUXO<b class="u">_</b>FASES<b class="u">_</b>PROD</span>
<div class="" style="left:16.5px;top:570.46px;width:9px;height:0px;border-top:1px dotted #bcc4c4;"></div>
<svg style="left:26.1px;top:564.06px" width="15" height="13.8" viewBox="0 0 15 13.8">
<path d="M0 0 H5.6 L6.8 1.8 H15 V13.8 H0 Z" fill="#c4202e"/><path d="M0 0 H5.6 L4 2.4 H0Z" fill="#ee0018"/>
<rect x="2.5" y="5.2" width="11" height="6.6" fill="#8c5058"/>
<rect x="2.5" y="5.2" width="11" height="1" fill="#606868"/>
<g fill="#eef4f4"><rect x="3.3" y="6.45" width="1.3" height="1.2"/><rect x="5.4" y="6.45" width="5.2" height="1.2"/><rect x="11.4" y="6.45" width="1.3" height="1.2"/><rect x="3.3" y="8.25" width="1.3" height="1.2"/><rect x="5.4" y="8.25" width="5.2" height="1.2"/><rect x="11.4" y="8.25" width="1.3" height="1.2"/><rect x="3.3" y="10.05" width="1.3" height="1.2"/><rect x="5.4" y="10.05" width="5.2" height="1.2"/><rect x="11.4" y="10.05" width="1.3" height="1.2"/></g></svg>
<span class="t" style="left:46.2px;top:565.16px;line-height:14px;font-family:'Liberation Mono',monospace;font-size:10px;font-weight:400;color:#000;letter-spacing:0.718px;-webkit-text-stroke:0.35px #000;">BENEGRPFLUXOFASEPROD</span>
</div>
<div class="" style="left:93.6px;top:343.7px;width:6px;height:1.5px;background:#2a2a2a;"></div>
<div class="" style="left:127.5px;top:343.7px;width:6px;height:1.5px;background:#2a2a2a;"></div>
<div class="" style="left:263.8px;top:69px;width:15.4px;height:504px;background:#ecebe7;"></div>
<div class="" style="left:263.8px;top:69px;width:15.4px;height:15.2px;background:#d4d0c8;box-shadow:inset 1px 1px #d4d0c8,inset -1px -1px #404040,inset 2px 2px #fff,inset -2px -2px #808080;"></div>
<svg style="left:0;top:0" width="800" height="596"><path d="M267.9 78.19999999999999 L271.5 74.39999999999999 L275.1 78.19999999999999Z" fill="#000"/></svg>
<div class="" style="left:263.8px;top:84.2px;width:15.4px;height:9.3px;background:#d4d0c8;box-shadow:inset 1px 1px #d4d0c8,inset -1px -1px #404040,inset 2px 2px #fff,inset -2px -2px #808080;"></div>
<div class="" style="left:263.8px;top:557.2px;width:15.4px;height:15.4px;background:#d4d0c8;box-shadow:inset 1px 1px #d4d0c8,inset -1px -1px #404040,inset 2px 2px #fff,inset -2px -2px #808080;"></div>
<svg style="left:0;top:0" width="800" height="596"><path d="M267.9 563.1000000000001 L271.5 566.9000000000001 L275.1 563.1000000000001Z" fill="#000"/></svg>
<span class="t" style="left:287.5px;top:69.00px;line-height:14px;font-family:'Liberation Mono',monospace;font-size:10px;font-weight:400;color:#000;letter-spacing:0.739px;-webkit-text-stroke:0.35px #000;">Descrição: ACABAMENTOFIO(Sem Descricao no ERwin)</span>
<span class="t" style="left:287.5px;top:82.90px;line-height:14px;font-family:'Liberation Mono',monospace;font-size:10px;font-weight:400;color:#000;letter-spacing:0.739px;-webkit-text-stroke:0.35px #000;">Nome do Arquivo: ACABAMENTOFIO        Módulo: Tabelas A</span>
<div class="" style="left:284px;top:119px;width:512px;height:455px;box-shadow:inset 1px 1px #fff,inset -1px -1px #404040,inset -2px -2px #808080;"></div>
<div class="" style="left:284px;top:99.5px;width:55.5px;height:20.5px;background:#d4d0c8;border-radius:2px 2px 0 0;box-shadow:inset 1px 1px #fff,inset -1px 0 #404040,inset -2px 0 #808080;"></div>
<span class="t" style="left:291.8px;top:104.30px;line-height:14px;font-family:'Liberation Mono',monospace;font-size:10px;font-weight:400;color:#000;letter-spacing:0.737px;-webkit-text-stroke:0.35px #000;">Campos</span>
<div class="" style="left:339.5px;top:101.5px;width:57.0px;height:17.5px;border-radius:2px 2px 0 0;box-shadow:inset 0 1px #fff,inset -1px 0 #404040,inset -2px 0 #808080;"></div>
<span class="t" style="left:343.8px;top:106.10px;line-height:14px;font-family:'Liberation Mono',monospace;font-size:10px;font-weight:400;color:#000;letter-spacing:0.738px;-webkit-text-stroke:0.35px #000;">Índices</span>
<div class="" style="left:396.5px;top:101.5px;width:92.0px;height:17.5px;border-radius:2px 2px 0 0;box-shadow:inset 0 1px #fff,inset -1px 0 #404040,inset -2px 0 #808080;"></div>
<span class="t" style="left:402.6px;top:106.10px;line-height:14px;font-family:'Liberation Mono',monospace;font-size:10px;font-weight:400;color:#000;letter-spacing:0.739px;-webkit-text-stroke:0.35px #000;">Foreign Keys</span>
<div class="" style="left:288px;top:123px;width:503px;height:266px;background:#fff;box-shadow:inset 1px 1px #808080,inset -1px -1px #fff,inset 2px 2px #404040,inset -2px -2px #d4d0c8;"></div>
<div class="" style="left:290px;top:125px;width:47.5px;height:16.80000000000001px;background:#d4d0c8;box-shadow:inset 1px 1px #fff,inset -1px -1px #404040;"></div>
<span class="t" style="left:295.5px;top:128.70px;line-height:14px;font-family:'Liberation Mono',monospace;font-size:10px;font-weight:400;color:#000;letter-spacing:0.735px;-webkit-text-stroke:0.35px #000;">Pos</span>
<div class="" style="left:337.5px;top:125px;width:221.0px;height:16.80000000000001px;background:#d4d0c8;box-shadow:inset 1px 1px #fff,inset -1px -1px #404040;"></div>
<span class="t" style="left:343.0px;top:128.70px;line-height:14px;font-family:'Liberation Mono',monospace;font-size:10px;font-weight:400;color:#000;letter-spacing:0.736px;-webkit-text-stroke:0.35px #000;">Nome</span>
<div class="" style="left:558.5px;top:125px;width:97.0px;height:16.80000000000001px;background:#d4d0c8;box-shadow:inset 1px 1px #fff,inset -1px -1px #404040;"></div>
<span class="t" style="left:564.0px;top:128.70px;line-height:14px;font-family:'Liberation Mono',monospace;font-size:10px;font-weight:400;color:#000;letter-spacing:0.736px;-webkit-text-stroke:0.35px #000;">Tipo</span>
<div class="" style="left:655.5px;top:125px;width:67.20000000000005px;height:16.80000000000001px;background:#d4d0c8;box-shadow:inset 1px 1px #fff,inset -1px -1px #404040;"></div>
<span class="t" style="left:661.0px;top:128.70px;line-height:14px;font-family:'Liberation Mono',monospace;font-size:10px;font-weight:400;color:#000;letter-spacing:0.738px;-webkit-text-stroke:0.35px #000;">Tamanho</span>
<div class="" style="left:722.7px;top:125px;width:66.29999999999995px;height:16.80000000000001px;background:#d4d0c8;box-shadow:inset 1px 1px #fff,inset -1px -1px #404040;"></div>
<span class="t" style="left:728.2px;top:128.70px;line-height:14px;font-family:'Liberation Mono',monospace;font-size:10px;font-weight:400;color:#000;letter-spacing:0.738px;-webkit-text-stroke:0.35px #000;">Precisão</span>
<div class="" style="left:290px;top:371.4px;width:499px;height:15.2px;background:#ecebe7;"></div>
<div class="" style="left:290px;top:371.4px;width:14.6px;height:15.2px;background:#d4d0c8;box-shadow:inset 1px 1px #d4d0c8,inset -1px -1px #404040,inset 2px 2px #fff,inset -2px -2px #808080;"></div>
<svg style="left:0;top:0" width="800" height="596"><path d="M298.7 375.4 L294.90000000000003 379.0 L298.7 382.6Z" fill="#000"/></svg>
<div class="" style="left:304.6px;top:371.4px;width:316.6px;height:15.2px;background:#d4d0c8;box-shadow:inset 1px 1px #d4d0c8,inset -1px -1px #404040,inset 2px 2px #fff,inset -2px -2px #808080;"></div>
<div class="" style="left:774.2px;top:371.4px;width:15.2px;height:15.2px;background:#d4d0c8;box-shadow:inset 1px 1px #d4d0c8,inset -1px -1px #404040,inset 2px 2px #fff,inset -2px -2px #808080;"></div>
<svg style="left:0;top:0" width="800" height="596"><path d="M780.0000000000001 375.4 L783.8000000000001 379.0 L780.0000000000001 382.6Z" fill="#000"/></svg>
<div class="" style="left:288.5px;top:412px;width:503.0px;height:159px;box-shadow:inset 1px 1px #fff,inset -1px -1px #404040,inset -2px -2px #808080;"></div>
<div class="" style="left:288.5px;top:392.3px;width:68.0px;height:20.69999999999999px;background:#d4d0c8;border-radius:2px 2px 0 0;box-shadow:inset 1px 1px #fff,inset -1px 0 #404040,inset -2px 0 #808080;"></div>
<span class="t" style="left:295.0px;top:397.10px;line-height:14px;font-family:'Liberation Mono',monospace;font-size:10px;font-weight:400;color:#000;letter-spacing:0.738px;-webkit-text-stroke:0.35px #000;">Máscaras</span>
<div class="" style="left:356.5px;top:394.3px;width:70.0px;height:17.69999999999999px;border-radius:2px 2px 0 0;box-shadow:inset 0 1px #fff,inset -1px 0 #404040,inset -2px 0 #808080;"></div>
<span class="t" style="left:361.0px;top:398.90px;line-height:14px;font-family:'Liberation Mono',monospace;font-size:10px;font-weight:400;color:#000;letter-spacing:0.738px;-webkit-text-stroke:0.35px #000;">Calculado</span>
<div class="" style="left:426.5px;top:394.3px;width:59.0px;height:17.69999999999999px;border-radius:2px 2px 0 0;box-shadow:inset 0 1px #fff,inset -1px 0 #404040,inset -2px 0 #808080;"></div>
<span class="t" style="left:433.0px;top:398.90px;line-height:14px;font-family:'Liberation Mono',monospace;font-size:10px;font-weight:400;color:#000;letter-spacing:0.738px;-webkit-text-stroke:0.35px #000;">Valores</span>
<div class="" style="left:485.5px;top:394.3px;width:79.0px;height:17.69999999999999px;border-radius:2px 2px 0 0;box-shadow:inset 0 1px #fff,inset -1px 0 #404040,inset -2px 0 #808080;"></div>
<span class="t" style="left:492.5px;top:398.90px;line-height:14px;font-family:'Liberation Mono',monospace;font-size:10px;font-weight:400;color:#000;letter-spacing:0.738px;-webkit-text-stroke:0.35px #000;">Enumerados</span>
<div class="" style="left:292px;top:416px;width:496.5px;height:151.5px;background:#d4d0c8;box-shadow:inset 1px 1px #808080,inset -1px -1px #fff,inset 2px 2px #404040,inset -2px -2px #d4d0c8;"></div>
<div class="" style="left:294.5px;top:418px;width:220.0px;height:16.19999999999999px;background:#d4d0c8;box-shadow:inset 1px 1px #fff,inset -1px -1px #404040;"></div>
<span class="t" style="left:300.0px;top:421.40px;line-height:14px;font-family:'Liberation Mono',monospace;font-size:10px;font-weight:400;color:#000;letter-spacing:0.738px;-webkit-text-stroke:0.35px #000;">Expressão</span>
<div class="" style="left:514.5px;top:418px;width:96.0px;height:16.19999999999999px;background:#d4d0c8;box-shadow:inset 1px 1px #fff,inset -1px -1px #404040;"></div>
<span class="t" style="left:520.0px;top:421.40px;line-height:14px;font-family:'Liberation Mono',monospace;font-size:10px;font-weight:400;color:#000;letter-spacing:0.738px;-webkit-text-stroke:0.35px #000;">Máscara</span>
<div class="" style="left:610.5px;top:418px;width:175.0px;height:16.19999999999999px;background:#d4d0c8;box-shadow:inset 1px 1px #fff,inset -1px -1px #404040;"></div>
<div class="" style="left:6px;top:576px;width:95px;height:17px;box-shadow:inset 1px 1px #808080,inset -1px -1px #fff;"></div>
<div class="" style="left:103.5px;top:576px;width:692px;height:17px;box-shadow:inset 1px 1px #808080,inset -1px -1px #fff;"></div>
<svg style="left:782px;top:581px" width="13" height="12" viewBox="0 0 13 12"><g stroke-width="1.1">
<path d="M1 12 L13 0 M5 12 L13 4 M9 12 L13 8" stroke="#808080"/><path d="M0 12 L12 0 M4 12 L12 4 M8 12 L12 8" stroke="#fff" opacity=".8" transform="translate(-0.9,0)"/></g></svg>
<div class="" style="left:7px;top:41px;width:186.8px;height:302px;background:#d4d0c8;box-shadow:inset 1px 1px #d4d0c8,inset -1px -1px #404040,inset 2px 2px #fff,inset -2px -2px #808080,1px 1px 2px rgba(0,0,0,.28);"></div>
<span class="t" style="left:24.3px;top:44.20px;line-height:14px;font-family:'Liberation Sans',sans-serif;font-size:10.6px;font-weight:400;color:#000;letter-spacing:-0.027px;">Informações</span>
<span class="t" style="left:140px;top:44.20px;line-height:14px;font-family:'Liberation Sans',sans-serif;font-size:10.6px;font-weight:400;color:#000;letter-spacing:-0.438px;">F2</span>
<span class="t" style="left:24.3px;top:60.40px;line-height:14px;font-family:'Liberation Sans',sans-serif;font-size:10.6px;font-weight:400;color:#000;letter-spacing:-0.195px;">Cadastro de módulos</span>
<span class="t" style="left:140px;top:60.40px;line-height:14px;font-family:'Liberation Sans',sans-serif;font-size:10.6px;font-weight:400;color:#000;letter-spacing:-0.438px;">F4</span>
<span class="t" style="left:24.3px;top:77.20px;line-height:14px;font-family:'Liberation Sans',sans-serif;font-size:10.6px;font-weight:400;color:#000;letter-spacing:-0.314px;">Tipos Enumerados</span>
<span class="t" style="left:140px;top:77.20px;line-height:14px;font-family:'Liberation Sans',sans-serif;font-size:10.6px;font-weight:400;color:#000;letter-spacing:-0.438px;">F8</span>
<span class="t" style="left:24.3px;top:93.00px;line-height:14px;font-family:'Liberation Sans',sans-serif;font-size:10.6px;font-weight:400;color:#000;letter-spacing:-0.109px;">Exportação</span>
<svg style="left:181px;top:96.4px" width="4" height="7.2" viewBox="0 0 4 7.2"><path d="M0 0 L4 3.6 L0 7.2Z" fill="#000"/></svg>
<div class="" style="left:10px;top:111.3px;width:180px;height:2px;border-top:1px solid #808080;border-bottom:1px solid #fff;box-sizing:border-box;"></div>
<span class="t" style="left:24.3px;top:118.20px;line-height:14px;font-family:'Liberation Sans',sans-serif;font-size:10.6px;font-weight:400;color:#000;letter-spacing:-0.036px;">Criar nova versão</span>
<span class="t" style="left:24.3px;top:134.30px;line-height:14px;font-family:'Liberation Sans',sans-serif;font-size:10.6px;font-weight:400;color:#000;letter-spacing:-0.145px;">Criar versão em branco</span>
<div class="" style="left:10px;top:152.6px;width:180px;height:2px;border-top:1px solid #808080;border-bottom:1px solid #fff;box-sizing:border-box;"></div>
<div class="" style="left:9px;top:158.6px;width:181.5px;height:16.2px;background:#0a2474;"></div>
<span class="t" style="left:24.3px;top:159.60px;line-height:14px;font-family:'Liberation Sans',sans-serif;font-size:10.6px;font-weight:400;color:#fff;letter-spacing:-0.120px;">Gerar arquivo binário</span>
<span class="t" style="left:140px;top:159.60px;line-height:14px;font-family:'Liberation Sans',sans-serif;font-size:10.6px;font-weight:400;color:#fff;letter-spacing:-0.438px;">F5</span>
<span class="t" style="left:24.3px;top:176.20px;line-height:14px;font-family:'Liberation Sans',sans-serif;font-size:10.6px;font-weight:400;color:#000;letter-spacing:-0.033px;">Gerar fontes</span>
<span class="t" style="left:140px;top:176.20px;line-height:14px;font-family:'Liberation Sans',sans-serif;font-size:10.6px;font-weight:400;color:#000;letter-spacing:-0.438px;">F6</span>
<span class="t" style="left:24.3px;top:192.10px;line-height:14px;font-family:'Liberation Sans',sans-serif;font-size:10.6px;font-weight:400;color:#000;letter-spacing:-0.311px;">Gerar scripts SQL</span>
<svg style="left:181px;top:195.5px" width="4" height="7.2" viewBox="0 0 4 7.2"><path d="M0 0 L4 3.6 L0 7.2Z" fill="#000"/></svg>
<span class="t" style="left:24.3px;top:209.00px;line-height:14px;font-family:'Liberation Sans',sans-serif;font-size:10.6px;font-weight:400;color:#000;letter-spacing:-0.011px;">Importar/Exportar FK&#x27;s</span>
<span class="t" style="left:140px;top:209.00px;line-height:14px;font-family:'Liberation Sans',sans-serif;font-size:10.6px;font-weight:400;color:#000;letter-spacing:-0.438px;">F7</span>
<span class="t" style="left:24.3px;top:225.30px;line-height:14px;font-family:'Liberation Sans',sans-serif;font-size:10.6px;font-weight:400;color:#000;letter-spacing:-0.262px;">Comparar Bin Juncao</span>
<span class="t" style="left:24.3px;top:241.40px;line-height:14px;font-family:'Liberation Sans',sans-serif;font-size:10.6px;font-weight:400;color:#000;letter-spacing:-0.224px;">Checar Consistencia</span>
<span class="t" style="left:24.3px;top:258.00px;line-height:14px;font-family:'Liberation Sans',sans-serif;font-size:10.6px;font-weight:400;color:#000;letter-spacing:-0.416px;">Views</span>
<span class="t" style="left:24.3px;top:274.20px;line-height:14px;font-family:'Liberation Sans',sans-serif;font-size:10.6px;font-weight:400;color:#000;letter-spacing:-0.243px;">Foreign Keys</span>
<div class="" style="left:10px;top:292.4px;width:180px;height:2px;border-top:1px solid #808080;border-bottom:1px solid #fff;box-sizing:border-box;"></div>
<span class="t" style="left:24.3px;top:299.20px;line-height:14px;font-family:'Liberation Sans',sans-serif;font-size:10.6px;font-weight:400;color:#000;letter-spacing:-0.253px;">Opções</span>
<span class="t" style="left:140px;top:299.20px;line-height:14px;font-family:'Liberation Sans',sans-serif;font-size:10.6px;font-weight:400;color:#000;letter-spacing:0.182px;">Ctrl+O</span>
<div class="" style="left:10px;top:316.7px;width:180px;height:2px;border-top:1px solid #808080;border-bottom:1px solid #fff;box-sizing:border-box;"></div>
<span class="t" style="left:24.3px;top:324.00px;line-height:14px;font-family:'Liberation Sans',sans-serif;font-size:10.6px;font-weight:400;color:#000;letter-spacing:-0.461px;">Sair</span>
<span class="t" style="left:140px;top:324.00px;line-height:14px;font-family:'Liberation Sans',sans-serif;font-size:10.6px;font-weight:400;color:#000;letter-spacing:0.096px;">Alt+F4</span>
</div></body></html>
